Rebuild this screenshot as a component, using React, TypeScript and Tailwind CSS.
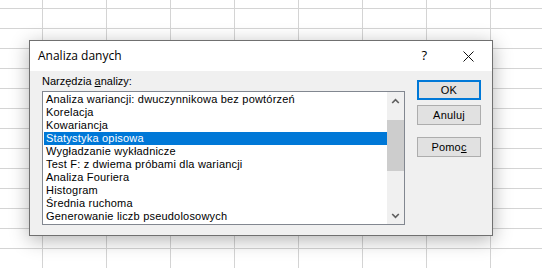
import React from "react";

const tools = [
  "Analiza wariancji: dwuczynnikowa bez powtórzeń",
  "Korelacja",
  "Kowariancja",
  "Statystyka opisowa",
  "Wygładzanie wykładnicze",
  "Test F: z dwiema próbami dla wariancji",
  "Analiza Fouriera",
  "Histogram",
  "Średnia ruchoma",
  "Generowanie liczb pseudolosowych",
];

const selected = 3;

function Chevron({ up }: { up?: boolean }) {
  return (
    <svg width="9" height="6" viewBox="0 0 9 6" className={up ? "" : "rotate-180"}>
      <path d="M1.2 5 L4.5 1.7 L7.8 5" fill="none" stroke="#606060" strokeWidth="1.7" />
    </svg>
  );
}

function Btn({ children, focused }: { children: React.ReactNode; focused?: boolean }) {
  return (
    <div
      className={
        "w-[64px] h-[20px] flex items-center justify-center bg-[#e1e1e1] text-[11px] tracking-[0.2px] text-black " +
        (focused ? "border-2 border-[#0078d7]" : "border border-[#adadad]")
      }
    >
      {children}
    </div>
  );
}

export default function App() {
  const cells = Array.from({ length: 9 * 14 });

  return (
    <div
      className="relative w-[542px] h-[268px] overflow-hidden bg-white"
      style={{ fontFamily: '"Liberation Sans", Arial, sans-serif' }}
    >
      {/* sheet grid behind the dialog */}
      <div className="grid grid-cols-[43px_repeat(8,64px)] grid-rows-[9px_repeat(13,20px)]">
        {cells.map((_, i) => (
          <div key={i} className="border-r border-b border-[#d4d4d4]" />
        ))}
      </div>

      {/* dialog window */}
      <div className="absolute left-[29px] top-[40px] w-[464px] h-[196px] flex flex-col border border-[#707070] bg-[#f0f0f0] shadow-[0_4px_18px_rgba(0,0,0,0.3)]">
        <div className="h-[30px] flex items-center bg-white pl-[8px] pr-[18px]">
          <span className="text-[12px] text-black font-['Open_Sans',sans-serif]">Analiza danych</span>
          <span className="ml-auto mr-[36px] text-[13px] text-black font-['Open_Sans',sans-serif]">?</span>
          <svg width="11" height="11" viewBox="0 0 11 11">
            <path d="M0.5 0.5 L10.5 10.5 M10.5 0.5 L0.5 10.5" stroke="#111" strokeWidth="1" />
          </svg>
        </div>

        <div className="flex-1 flex pl-[12px] pr-[11px]">
          <div className="flex flex-col pt-[4px]">
            <div className="h-[13px] leading-[13px] text-[11px] text-black">
              Narzędzia <span className="underline">a</span>nalizy:
            </div>
            <div className="mt-[3px] w-[363px] h-[134px] flex border border-[#828790] bg-white">
              <div className="flex-1 pl-[1px] pt-[1px]">
                {tools.map((t, i) => (
                  <div
                    key={t}
                    className={
                      "h-[13px] leading-[13px] pl-[2px] text-[11px] tracking-[0.2px] whitespace-nowrap " +
                      (i === selected ? "bg-[#0078d7] text-white" : "text-black")
                    }
                  >
                    {t}
                  </div>
                ))}
              </div>
              <div className="w-[17px] flex flex-col bg-[#f0f0f0]">
                <div className="h-[17px] flex items-center justify-center">
                  <Chevron up />
                </div>
                <div className="flex-1">
                  <div className="mt-[11px] h-[51px] bg-[#cdcdcd]" />
                </div>
                <div className="h-[17px] flex items-center justify-center">
                  <Chevron />
                </div>
              </div>
            </div>
          </div>

          <div className="ml-[12px] pt-[9px] flex flex-col">
            <Btn focused>OK</Btn>
            <div className="mt-[5px]">
              <Btn>Anuluj</Btn>
            </div>
            <div className="mt-[12px]">
              <Btn>
                Pomo<span className="underline">c</span>
              </Btn>
            </div>
          </div>
        </div>
      </div>
    </div>
  );
}
